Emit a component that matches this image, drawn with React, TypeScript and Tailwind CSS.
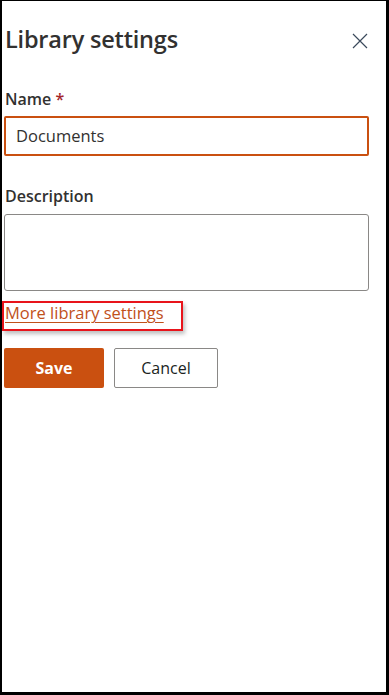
const font = { fontFamily: '"Segoe UI", "Open Sans", "Noto Sans", sans-serif' };

function CloseIcon() {
  return (
    <svg width="16" height="16" viewBox="0 0 16 16" className="text-[#3b4a5c]">
      <path d="M1 1 L15 15 M15 1 L1 15" stroke="currentColor" strokeWidth="1.2" fill="none" />
    </svg>
  );
}

export default function App() {
  return (
    <div
      className="relative w-[389px] h-[695px] overflow-hidden bg-white border-l-2 border-t-[1px] border-r-[3px] border-b-[3px] border-black text-[#323130]"
      style={font}
    >
      <div className="pl-[2px] pr-[17px]">
        {/* header */}
        <div className="flex items-center justify-between pt-[19px] h-[58px]">
          <h1 className="text-[23.5px] font-semibold leading-none tracking-[-0.2px] pl-[1px]">Library settings</h1>
          <div className="mr-[1px] mt-[2px]">
            <CloseIcon />
          </div>
        </div>

        {/* name */}
        <label className="block mt-[30px] text-[16px] font-semibold leading-[20px] pl-[1px]">
          Name <span className="text-[#a4262c]">*</span>
        </label>
        <div className="mt-[7px] h-[40px] border-2 border-[#ca5010] rounded-[2px] flex items-center px-[10px] text-[16.5px]">
          Documents
        </div>

        {/* description */}
        <label className="block mt-[30px] text-[16px] font-semibold leading-[20px] pl-[1px]">Description</label>
        <div className="mt-[8px] h-[77px] border border-[#8a8886] rounded-[3px]" />

        {/* link */}
        <div className="mt-[10px] ml-[-2px] w-[181px] h-[30px] border-2 border-[#e8141b] shadow-[2px_3px_4px_rgba(0,0,0,0.25)] pl-[1px] flex items-start">
          <a href="#" className="text-[16.5px] leading-[20px] text-[#c1501a] underline underline-offset-[3px] decoration-1">
            More library settings
          </a>
        </div>

        {/* buttons */}
        <div className="mt-[17px] flex gap-[10px]">
          <button className="w-[100px] h-[40px] bg-[#ca5010] rounded-[2px] text-white text-[16px] font-bold">Save</button>
          <button className="w-[104px] h-[40px] border border-[#8a8886] rounded-[2px] text-[#201f1e] text-[16px]">Cancel</button>
        </div>
      </div>
    </div>
  );
}
